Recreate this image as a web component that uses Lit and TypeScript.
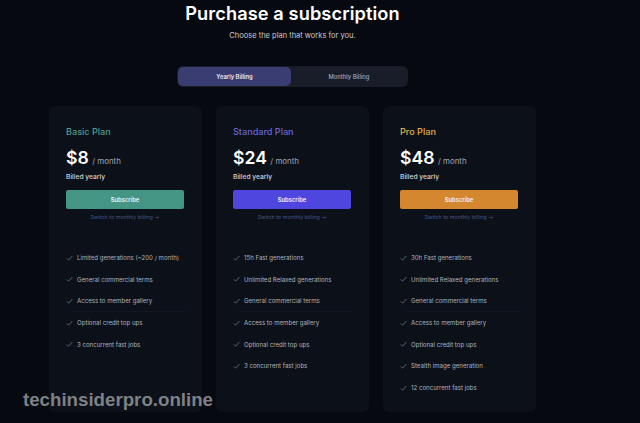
import { LitElement, html, css } from "lit";
import { customElement } from "lit/decorators.js";

interface Plan {
  name: string;
  price: string;
  kind: string;
  features: string[];
}

const PLANS: Plan[] = [
  {
    name: "Basic Plan",
    price: "$8",
    kind: "basic",
    features: [
      "Limited generations (~200 / month)",
      "General commercial terms",
      "Access to member gallery",
      "Optional credit top ups",
      "3 concurrent fast jobs",
    ],
  },
  {
    name: "Standard Plan",
    price: "$24",
    kind: "standard",
    features: [
      "15h Fast generations",
      "Unlimited Relaxed generations",
      "General commercial terms",
      "Access to member gallery",
      "Optional credit top ups",
      "3 concurrent fast jobs",
    ],
  },
  {
    name: "Pro Plan",
    price: "$48",
    kind: "pro",
    features: [
      "30h Fast generations",
      "Unlimited Relaxed generations",
      "General commercial terms",
      "Access to member gallery",
      "Optional credit top ups",
      "Stealth image generation",
      "12 concurrent fast jobs",
    ],
  },
];

const check = html`<svg class="check" viewBox="0 0 8 8" width="8" height="8" aria-hidden="true">
  <path d="M0.8 4.4 L2.6 6.2 L6.4 2" fill="none" stroke="#6f7a80" stroke-width="0.8" />
</svg>`;

@customElement("app-root")
export class AppRoot extends LitElement {
  static styles = css`
    :host {
      display: block;
      width: 640px;
      height: 423px;
      overflow: hidden;
      font-family: "Inter", "Noto Sans", sans-serif;
    }
    .page {
      position: relative;
      box-sizing: border-box;
      width: 640px;
      height: 423px;
      overflow: hidden;
      background: #070910;
      padding: 0 104px 0 49px;
      display: flex;
      flex-direction: column;
      align-items: center;
    }
    h1 {
      margin: 1px 0 0;
      font-size: 18.2px;
      line-height: 24px;
      font-weight: 600;
      color: #ffffff;
      white-space: nowrap;
      letter-spacing: 0.1px;
    }
    .sub {
      margin: 5px 0 0;
      font-size: 7.5px;
      line-height: 12px;
      color: #c9ccd3;
      white-space: nowrap;
    }
    .toggle {
      margin-top: 24px;
      box-sizing: border-box;
      width: 231px;
      height: 21px;
      padding: 1px;
      display: grid;
      grid-template-columns: 113px 1fr;
      border-radius: 6px;
      background: #191d2a;
      font-size: 5.8px;
      font-weight: 500;
    }
    .toggle span {
      display: flex;
      align-items: center;
      justify-content: center;
      white-space: nowrap;
    }
    .toggle .on {
      background: #3a3d72;
      border-radius: 5px;
      color: #e8e9f2;
      font-weight: 600;
    }
    .toggle .off {
      color: #a2a6b2;
    }
    .cards {
      margin-top: 19px;
      width: 100%;
      display: grid;
      grid-template-columns: repeat(3, 153px);
      justify-content: space-between;
    }
    .card {
      box-sizing: border-box;
      height: 306px;
      padding: 20px 17px 0;
      border-radius: 6px;
      background: #0b1019;
    }
    .name {
      font-size: 9.1px;
      line-height: 12px;
      font-weight: 500;
    }
    .basic .name { color: #4f9d8c; }
    .standard .name { color: #6a66d8; }
    .pro .name { color: #e2b048; }
    .price {
      margin-top: 9px;
      display: flex;
      align-items: baseline;
      gap: 3.5px;
      color: #ffffff;
      height: 22px;
    }
    .amount {
      font-size: 17.6px;
      font-weight: 600;
      line-height: 22px;
    }
    .per {
      font-size: 7.9px;
      color: #a2a6b0;
    }
    .billed {
      margin-top: 3px;
      font-size: 6.7px;
      line-height: 10px;
      color: #d2d4da;
      font-weight: 500;
    }
    .btn {
      margin-top: 8px;
      width: 118px;
      height: 19px;
      border-radius: 2px;
      display: flex;
      align-items: center;
      justify-content: center;
      font-size: 5.8px;
      font-weight: 600;
      color: #f4f4f6;
    }
    .basic .btn { background: #459584; }
    .standard .btn { background: #4f46e0; }
    .pro .btn { background: #d4872f; }
    .switch {
      margin-top: 4px;
      width: 118px;
      text-align: center;
      font-size: 5.4px;
      line-height: 8px;
      color: #475488;
      white-space: nowrap;
    }
    ul {
      list-style: none;
      margin: 32px 0 0;
      padding: 0;
      display: flex;
      flex-direction: column;
      gap: 12.7px;
    }
    li {
      position: relative;
      display: flex;
      align-items: center;
      gap: 3px;
      height: 9px;
      font-size: 6.1px;
      color: #b1b5bc;
      white-space: nowrap;
    }
    li:nth-child(3)::after {
      content: "";
      position: absolute;
      left: 6px;
      right: 0;
      top: 15px;
      height: 1px;
      background: #131823;
    }
    .check {
      flex: none;
    }
    .mark {
      position: absolute;
      left: 23px;
      top: 389px;
      font-family: "Liberation Sans", Arial, sans-serif;
      font-size: 18.7px;
      line-height: 22px;
      font-weight: 700;
      color: #7e8186;
      white-space: nowrap;
    }
  `;

  render() {
    return html`<div class="page">
      <h1>Purchase a subscription</h1>
      <p class="sub">Choose the plan that works for you.</p>
      <div class="toggle">
        <span class="on">Yearly Billing</span>
        <span class="off">Monthly Billing</span>
      </div>
      <div class="cards">
        ${PLANS.map(
          (p) => html`<section class="card ${p.kind}">
            <div class="name">${p.name}</div>
            <div class="price">
              <span class="amount">${p.price}</span><span class="per">/ month</span>
            </div>
            <div class="billed">Billed yearly</div>
            <div class="btn">Subscribe</div>
            <div class="switch">Switch to monthly billing →</div>
            <ul>
              ${p.features.map((f) => html`<li>${check}<span>${f}</span></li>`)}
            </ul>
          </section>`
        )}
      </div>
      <div class="mark">techinsiderpro.online</div>
    </div>`;
  }
}
